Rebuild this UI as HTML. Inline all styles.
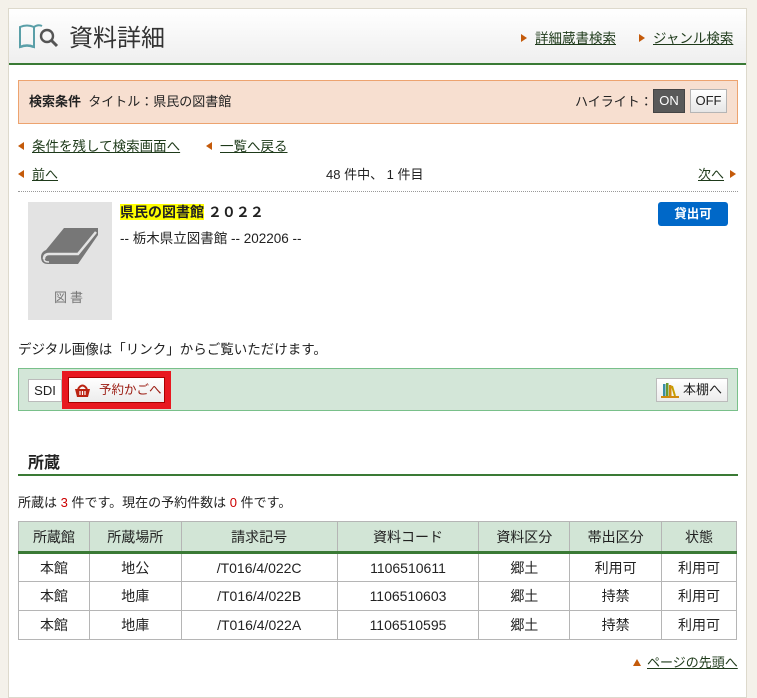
<!DOCTYPE html>
<html><head><meta charset="utf-8">
<style>
*{box-sizing:border-box;margin:0;padding:0}
body{width:757px;height:687px;background:#f4f1ea;font-family:"Liberation Sans","Noto Sans CJK JP",sans-serif;font-size:13px;color:#222;position:relative;overflow:hidden}
.panel{position:absolute;left:8px;top:8px;width:739px;height:690px;background:#fff;border:1px solid #ddd9cc}
.a{position:absolute;white-space:nowrap}
.u{color:#1e3a1a;text-decoration:underline}
.tri{display:inline-block;width:0;height:0;border-top:4px solid transparent;border-bottom:4px solid transparent;vertical-align:1px}
.tr{border-left:6px solid #c45a0a;margin-right:8px}
.tl{border-right:6px solid #c45a0a;margin-right:8px}
table{position:absolute;left:18px;top:521px;border-collapse:collapse;width:719px}
td,th{border:1px solid #b5b5b5;text-align:center;font-weight:normal;height:29px;font-size:14px}
th{background:#d2e5d6;height:31px}
thead tr{border-bottom:3px solid #3a7a35}
</style></head><body>
<div class="panel"></div>
<div class="a" style="left:9px;top:9px;width:737px;height:56px;background:linear-gradient(#fff,#efefef);border-bottom:2px solid #3a7a35"></div>
<svg class="a" style="left:18px;top:22px" width="42" height="28" viewBox="0 0 42 28">
<path d="M2 5 Q9 2 16 5 L16 25 Q9 22 2 25 Z" fill="none" stroke="#5a9fa8" stroke-width="2"/>
<path d="M16 5 Q20 2 24 4" fill="none" stroke="#5a9fa8" stroke-width="2"/>
<path d="M2 25 Q9 22 16 25" fill="none" stroke="#5a9fa8" stroke-width="2.5"/>
<circle cx="29" cy="14" r="6" fill="none" stroke="#555" stroke-width="2.4"/>
<path d="M33 18 L39 24" stroke="#555" stroke-width="3"/>
</svg>
<div class="a" style="left:69px;top:18px;font-size:24px;color:#333">資料詳細</div>
<div class="a" style="left:521px;top:27px;font-size:13.5px"><span class="tri tr"></span><span class="u">詳細蔵書検索</span></div>
<div class="a" style="left:639px;top:27px;font-size:13.5px"><span class="tri tr"></span><span class="u">ジャンル検索</span></div>

<div class="a" style="left:18px;top:80px;width:720px;height:44px;background:#f7dfd0;border:1px solid #eda36f"></div>
<div class="a" style="left:29px;top:91px;font-size:13px"><b>検索条件</b>&nbsp; タイトル：県民の図書館</div>
<div class="a" style="left:575px;top:91px;font-size:13px">ハイライト：</div>
<div class="a" style="left:653px;top:89px;width:32px;height:24px;background:#595959;color:#fff;border:1px solid #444;text-align:center;line-height:22px">ON</div>
<div class="a" style="left:690px;top:89px;width:37px;height:24px;background:linear-gradient(#fff,#e6e6e6);border:1px solid #b5b5b5;text-align:center;line-height:22px">OFF</div>

<div class="a" style="left:18px;top:135px;font-size:13.5px"><span class="tri tl"></span><span class="u">条件を残して検索画面へ</span></div>
<div class="a" style="left:206px;top:135px;font-size:13.5px"><span class="tri tl"></span><span class="u">一覧へ戻る</span></div>
<div class="a" style="left:18px;top:164px;font-size:13px"><span class="tri tl"></span><span class="u">前へ</span></div>
<div class="a" style="left:326px;top:164px;font-size:13px">48 件中、 1 件目</div>
<div class="a" style="left:698px;top:164px;font-size:13px"><span class="u">次へ</span><span class="tri tr" style="margin:0 0 0 6px"></span></div>
<div class="a" style="left:18px;top:191px;width:720px;border-top:1px dotted #999"></div>

<div class="a" style="left:28px;top:202px;width:84px;height:118px;background:#e3e3e3"></div>
<svg class="a" style="left:40px;top:226px" width="60" height="42" viewBox="0 0 60 42">
<path d="M24 2 L58 2 Q56 6 50 14 L20 14 Z" fill="#777"/>
<path d="M24 2 L58 2 L58 9 L38 38 L8 38 Q1 38 1 31 Q1 26 6 24 Z" fill="#777"/>
<path d="M4 33 Q4 28 9 28 L38 28 L56 6" fill="none" stroke="#e3e3e3" stroke-width="2.5"/>
<path d="M4 33 Q4 36 9 36" fill="none" stroke="#e3e3e3" stroke-width="1.5"/>
</svg>
<div class="a" style="left:54px;top:287px;color:#777;font-size:13px;letter-spacing:3px">図書</div>
<div class="a" style="left:120px;top:202px;font-size:14px;font-weight:bold"><span style="background:#ffff00">県民の図書館</span> ２０２２</div>
<div class="a" style="left:120px;top:227px;font-size:13.5px">-- 栃木県立図書館 -- 202206 --</div>
<div class="a" style="left:658px;top:202px;width:70px;height:24px;background:#0068c8;color:#fff;border-radius:3px;text-align:center;line-height:24px;font-weight:bold;font-size:12.5px">貸出可</div>

<div class="a" style="left:18px;top:338px;font-size:13.5px">デジタル画像は「リンク」からご覧いただけます。</div>

<div class="a" style="left:18px;top:368px;width:720px;height:43px;background:#d3e6d8;border:1px solid #79c08a"></div>
<div class="a" style="left:28px;top:379px;width:34px;height:23px;background:#fff;border:1px solid #bbb;text-align:center;line-height:21px;font-size:13px">SDI</div>
<div class="a" style="left:62px;top:371px;width:109px;height:38px;background:#e81820"></div>
<div class="a" style="left:68px;top:377px;width:97px;height:26px;background:linear-gradient(#fff,#ececec);border:1px solid #a00;color:#9a1a10;font-size:12.5px;line-height:24px;padding-left:30px">予約かごへ</div>
<svg class="a" style="left:74px;top:383px" width="17" height="15" viewBox="0 0 17 15"><path d="M4 6 Q8.5 -1 13 6" fill="none" stroke="#b21" stroke-width="2"/><path d="M1 6 H16 L14 14 H3 Z" fill="#b21"/><path d="M6 8 V12 M8.5 8 V12 M11 8 V12" stroke="#fff" stroke-width="1.2"/></svg>
<div class="a" style="left:656px;top:378px;width:72px;height:24px;background:linear-gradient(#fff,#ececec);border:1px solid #bbb;font-size:13px;line-height:22px;padding-left:26px">本棚へ</div>
<svg class="a" style="left:661px;top:382px" width="18" height="16" viewBox="0 0 18 16"><rect x="2" y="2" width="2.5" height="12" fill="#3a8fa5"/><rect x="5" y="1" width="2.5" height="13" fill="#6a9a30"/><rect x="8" y="3" width="2.5" height="11" fill="#d08a10"/><path d="M11 4 L14 14" stroke="#c7a000" stroke-width="2"/><rect x="0" y="14" width="18" height="2" fill="#d08a10"/></svg>

<div class="a" style="left:28px;top:449px;font-size:16px;font-weight:bold">所蔵</div>
<div class="a" style="left:18px;top:474px;width:720px;border-top:2px solid #3a7a35"></div>
<div class="a" style="left:18px;top:492px;font-size:13px">所蔵は <span style="color:#c00">3</span> 件です。現在の予約件数は <span style="color:#c00">0</span> 件です。</div>

<table>
<colgroup><col style="width:71px"><col style="width:92px"><col style="width:156px"><col style="width:142px"><col style="width:91px"><col style="width:92px"><col style="width:75px"></colgroup>
<thead><tr><th>所蔵館</th><th>所蔵場所</th><th>請求記号</th><th>資料コード</th><th>資料区分</th><th>帯出区分</th><th>状態</th></tr></thead>
<tbody>
<tr><td>本館</td><td>地公</td><td>/T016/4/022C</td><td>1106510611</td><td>郷土</td><td>利用可</td><td>利用可</td></tr>
<tr><td>本館</td><td>地庫</td><td>/T016/4/022B</td><td>1106510603</td><td>郷土</td><td>持禁</td><td>利用可</td></tr>
<tr><td>本館</td><td>地庫</td><td>/T016/4/022A</td><td>1106510595</td><td>郷土</td><td>持禁</td><td>利用可</td></tr>
</tbody></table>

<div class="a" style="left:633px;top:652px;font-size:13px"><span class="tri" style="border:0;border-left:4px solid transparent;border-right:4px solid transparent;border-bottom:7px solid #c45a0a;margin-right:6px;vertical-align:1px"></span><span class="u">ページの先頭へ</span></div>
</body></html>
